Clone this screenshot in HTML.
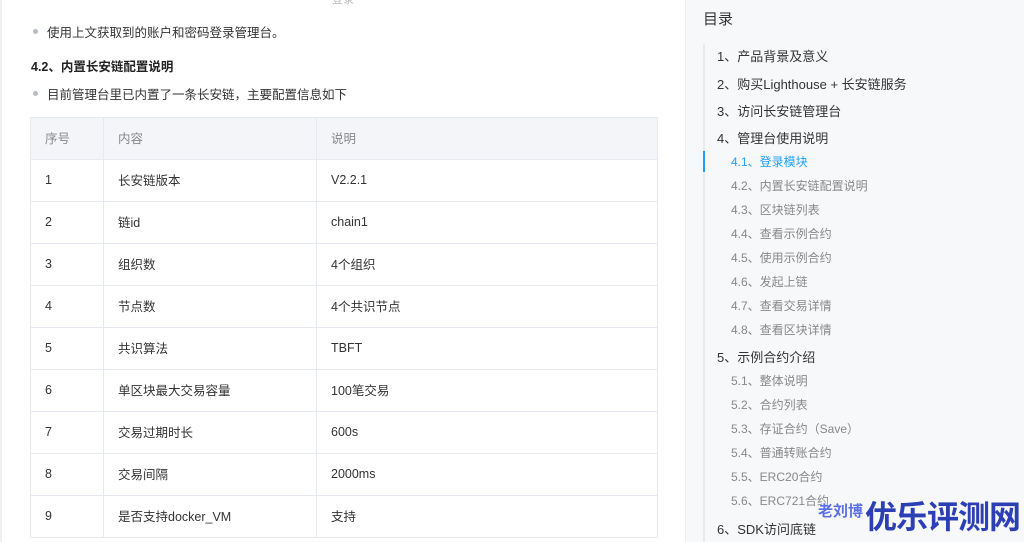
<!DOCTYPE html>
<html><head><meta charset="utf-8"><style>
*{margin:0;padding:0;box-sizing:border-box}
body{width:1024px;height:542px;overflow:hidden;background:#fff;font-family:"Liberation Sans","Noto Sans CJK SC",sans-serif;position:relative;color:#333}
.abs{position:absolute;white-space:nowrap}
.left{position:absolute;left:0;top:0;width:686px;height:542px;background:#fff;border-left:2px solid #eef0f3}
.side{position:absolute;left:685px;top:0;width:339px;height:542px;background:#f7f8fa;border-left:1px solid #eceef2}
.dot{position:absolute;width:5px;height:5px;border-radius:50%;background:#b8bdc6}
table{position:absolute;left:30px;top:117px;border-collapse:collapse;font-size:12.5px;color:#333}
td{border:1px solid #e6e9ef;height:42px;padding-left:14px;padding-bottom:2px}
tr.h td{background:#f3f5f9;color:#888}
.t{font-size:13px;color:#333}
.s{font-size:12px;color:#888}
</style></head><body>
<div class="left">
<div class="abs" style="left:330px;top:-9px;font-size:11px;color:#bbb">登录</div>
<div class="dot" style="left:31px;top:29px"></div>
<div class="abs" style="left:45px;top:22px;font-size:12.5px">使用上文获取到的账户和密码登录管理台。</div>
<div class="abs" style="left:29px;top:56px;font-size:12.5px;font-weight:bold;color:#222">4.2、内置长安链配置说明</div>
<div class="dot" style="left:31px;top:91px"></div>
<div class="abs" style="left:45px;top:84px;font-size:12.5px">目前管理台里已内置了一条长安链，主要配置信息如下</div>
</div>
<table>
<tr class="h"><td style="width:73px">序号</td><td style="width:213px">内容</td><td style="width:341px">说明</td></tr>
<tr><td>1</td><td>长安链版本</td><td>V2.2.1</td></tr>
<tr><td>2</td><td>链id</td><td>chain1</td></tr>
<tr><td>3</td><td>组织数</td><td>4个组织</td></tr>
<tr><td>4</td><td>节点数</td><td>4个共识节点</td></tr>
<tr><td>5</td><td>共识算法</td><td>TBFT</td></tr>
<tr><td>6</td><td>单区块最大交易容量</td><td>100笔交易</td></tr>
<tr><td>7</td><td>交易过期时长</td><td>600s</td></tr>
<tr><td>8</td><td>交易间隔</td><td>2000ms</td></tr>
<tr><td>9</td><td>是否支持docker_VM</td><td>支持</td></tr>
</table>
<div class="side">
<div class="abs" style="left:17px;top:8px;font-size:15px;color:#333">目录</div>
<div style="position:absolute;left:17px;top:44px;width:2px;height:498px;background:#e8eaee"></div>
<div style="position:absolute;left:17px;top:151px;width:2px;height:21px;background:#1e9fff"></div>
<div class="abs t" style="left:31px;top:46px">1、产品背景及意义</div>
<div class="abs t" style="left:31px;top:74px">2、购买Lighthouse + 长安链服务</div>
<div class="abs t" style="left:31px;top:101px">3、访问长安链管理台</div>
<div class="abs t" style="left:31px;top:128px">4、管理台使用说明</div>
<div class="abs s" style="left:45px;top:153px;color:#1e9fff">4.1、登录模块</div>
<div class="abs s" style="left:45px;top:177px">4.2、内置长安链配置说明</div>
<div class="abs s" style="left:45px;top:201px">4.3、区块链列表</div>
<div class="abs s" style="left:45px;top:225px">4.4、查看示例合约</div>
<div class="abs s" style="left:45px;top:249px">4.5、使用示例合约</div>
<div class="abs s" style="left:45px;top:273px">4.6、发起上链</div>
<div class="abs s" style="left:45px;top:297px">4.7、查看交易详情</div>
<div class="abs s" style="left:45px;top:321px">4.8、查看区块详情</div>
<div class="abs t" style="left:31px;top:347px">5、示例合约介绍</div>
<div class="abs s" style="left:45px;top:372px">5.1、整体说明</div>
<div class="abs s" style="left:45px;top:396px">5.2、合约列表</div>
<div class="abs s" style="left:45px;top:420px">5.3、存证合约（Save）</div>
<div class="abs s" style="left:45px;top:444px">5.4、普通转账合约</div>
<div class="abs s" style="left:45px;top:468px">5.5、ERC20合约</div>
<div class="abs s" style="left:45px;top:492px">5.6、ERC721合约</div>
<div class="abs t" style="left:31px;top:519px">6、SDK访问底链</div>
</div>
<div class="abs" style="left:818px;top:500px;font-size:15px;color:#5a6ee6;font-weight:bold">老刘博</div>
<div class="abs" style="left:865px;top:492px;font-size:32px;color:#2c3fb5;font-weight:bold;letter-spacing:-1px">优乐评测网</div>
</body></html>
